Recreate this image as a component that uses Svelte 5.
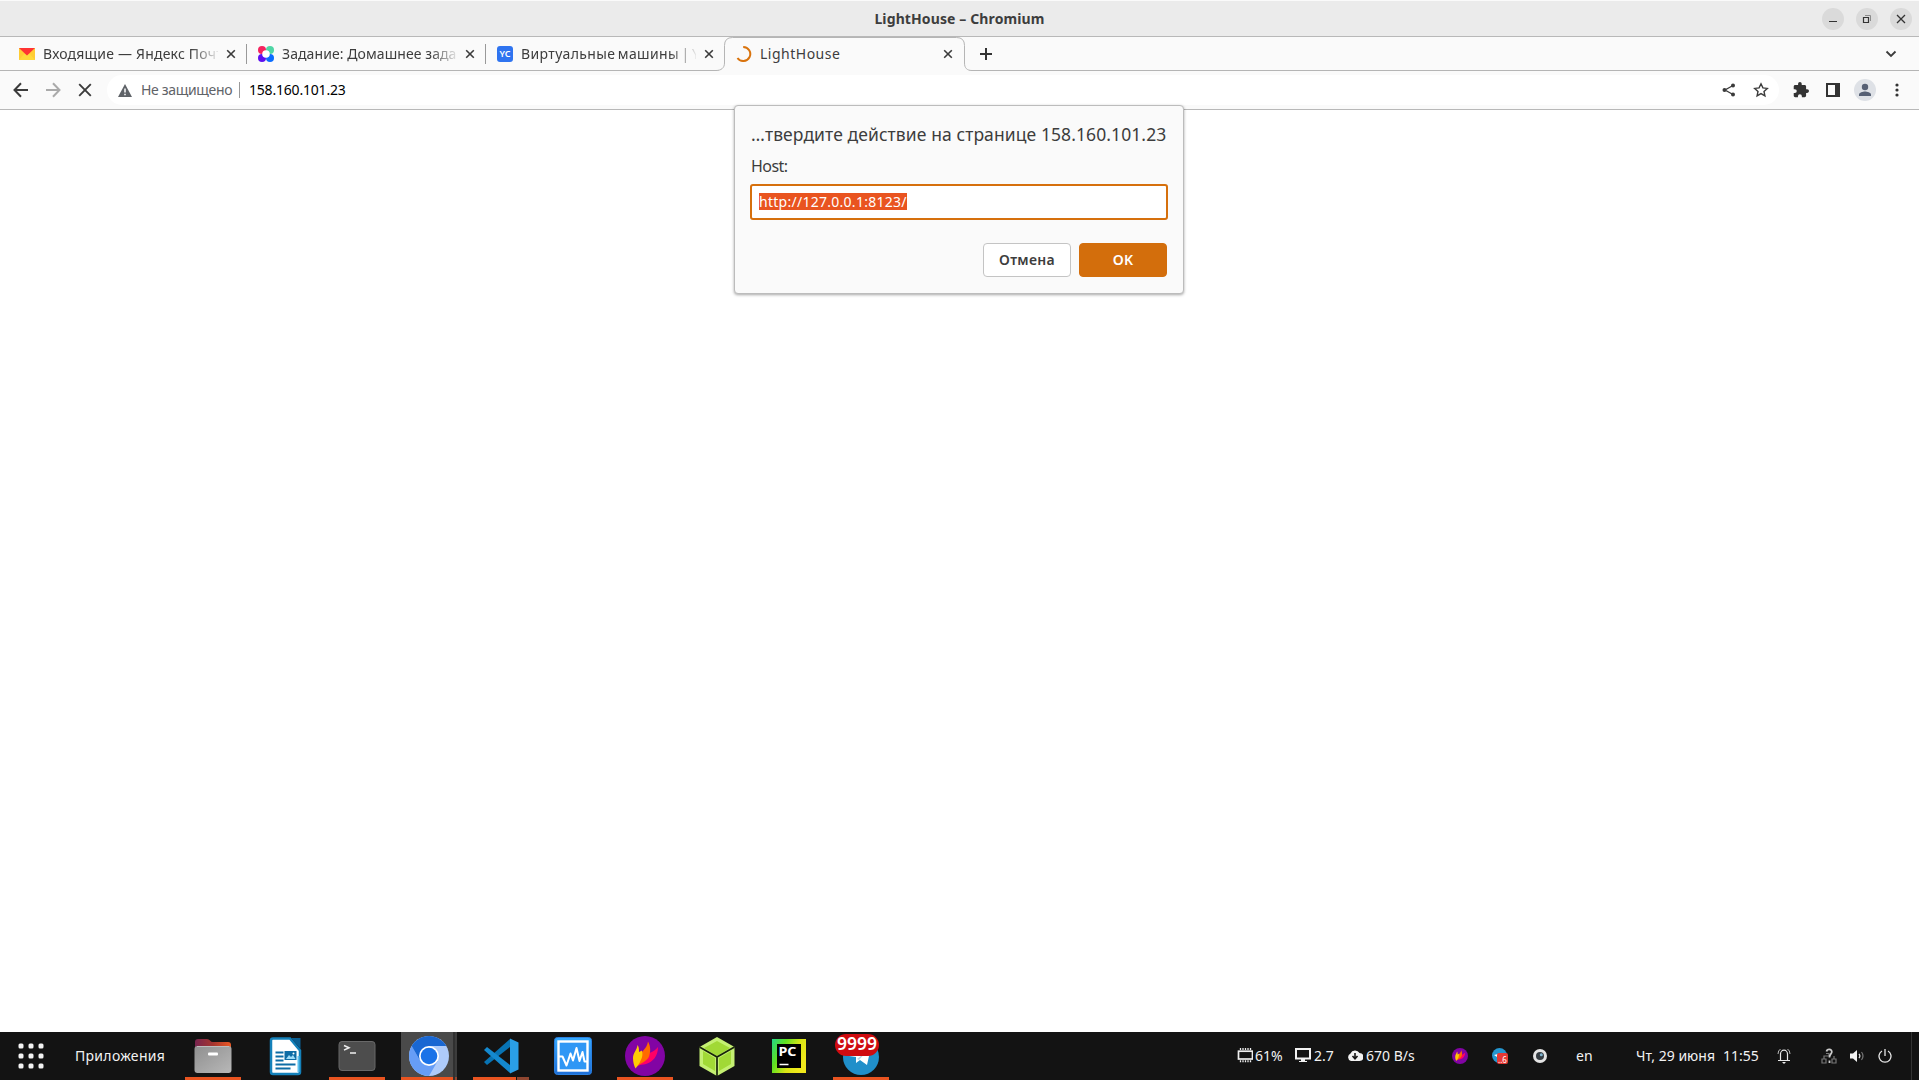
<script>
  const tabs = [
    { kind: 'mail', title: 'Входящие — Яндекс Почта' },
    { kind: 'task', title: 'Задание: Домашнее задание' },
    { kind: 'cloud', title: 'Виртуальные машины | Yandex' },
    { kind: 'load', title: 'LightHouse', active: true }
  ];
  const apps = [
    { id: 'files', run: true },
    { id: 'writer' },
    { id: 'terminal', run: true },
    { id: 'chromium', run: true, focus: true },
    { id: 'code', run: true, two: true },
    { id: 'monitor' },
    { id: 'flame', run: true },
    { id: 'cube' },
    { id: 'pycharm' },
    { id: 'telegram', run: true }
  ];
  const dots = [3, 13, 23];
  const pins = [3, 5.500, 8, 10.500, 13];
</script>

{#snippet flame()}
  <circle cx="20" cy="20" r="20" fill="#8204a4" />
  <path d="M13 30C16 25 18 22 20 20c4-4 8-3 13-9 0 9-5 15-12 17-3 1-5 0-8 2z" fill="#ff0066" />
  <path d="M12 30.500C13 27 16 24 16 19c0-4 6-6 7-13.500 2.500 5 3 9 1 15-2 5-8 6-12 10z" fill="#ff6a00" />
  <path d="M10.500 32.500C9 30 8 26 8 22c0-5 4-8 4.500-13 1.500 2 1.500 4 1.500 7l3-1.500C18 20 17 22 15 26c-1 2-2.500 4-4.500 6.500z" fill="#ffcb05" />
{/snippet}

<div class="screen">
  <header class="title">
    <div class="caption">LightHouse – Chromium</div>
    <div class="winbtns">
      <svg width="22" height="22"><circle cx="11" cy="11" r="11" fill="#dadada" /><path d="M7 13.5h8" stroke="#333" /></svg>
      <svg width="22" height="22"><circle cx="11" cy="11" r="11" fill="#dadada" /><path d="M7.500 9.500h5v5h-5z" fill="none" stroke="#333" stroke-width="1.200" /><path d="M9 7.500h5.500V13" fill="none" stroke="#8b8b8b" /></svg>
      <svg width="22" height="22"><circle cx="11" cy="11" r="11" fill="#dadada" /><path d="M7 7l8 8M15 7l-8 8" stroke="#333" stroke-width="1.3" /></svg>
    </div>
  </header>

  <nav class="tabs">
    {#each tabs as tab, i}
      <div class="tab {tab.kind}" class:active={tab.active} class:sep={i < 2}>
        {#if tab.active}
          <svg class="shape" width="256" height="35" viewBox="0 0 256 35">
            <path d="M0 35V33.500C5 33.500 8.500 31 8.500 26V8.500Q8.500 .5 16.500 .5H240.500Q248.500 .5 248.500 8.500V26C248.500 31 251 33.500 256 33.500V35z" fill="#fafafa" />
            <path d="M0 33.500C5 33.500 8.500 31 8.500 26V8.500Q8.500 .5 16.500 .5H240.500Q248.500 .5 248.500 8.500V26C248.500 31 251 33.500 256 33.500" fill="none" stroke="#b5b5b5" />
          </svg>
        {/if}
        <svg class="fav" width="16" height="16">
          {#if tab.kind === 'mail'}
            <path d="M0 2h16v12H0z" fill="#ffcc33" /><path d="M0 14L5 8h6l5 6z" fill="#ffd83b" /><path d="M0 2h16L8 9.500z" fill="#f33" />
          {:else if tab.kind === 'task'}
            <circle cx="4" cy="4" r="4" fill="#f5245f" /><circle cx="12" cy="4" r="4" fill="#4fd6a5" /><circle cx="4" cy="12" r="4" fill="#5d0ff0" /><circle cx="12" cy="12" r="4" fill="#0a6cff" /><circle cx="8" cy="8" r="3.800" fill="#fff" />
          {:else if tab.kind === 'cloud'}
            <rect width="16" height="16" rx="3" fill="#2f74f0" /><text class="yc" x="8" y="11.300" text-anchor="middle">YC</text>
          {:else}
            <path d="M7.200 1A7 7 0 1 1 1.500 12" fill="none" stroke="#d9730d" stroke-width="2" />
          {/if}
        </svg>
        <span class="name">{tab.title}</span>
        <svg class="x" width="10" height="10"><path d="M1.200 1.200l7.600 7.600M8.800 1.200l-7.600 7.600" stroke="#3b3b3b" stroke-width="1.600" /></svg>
      </div>
    {/each}
    <svg class="plus" width="12" height="12"><path d="M6 0v12M0 6h12" stroke="#333" stroke-width="2" /></svg>
    <svg class="chev" width="12" height="8"><path d="M1.500 1.500L6 6l4.500-4.500" fill="none" stroke="#3b3b3b" stroke-width="1.800" /></svg>
  </nav>

  <div class="toolbar">
    <svg class="nav" width="16" height="16"><path d="M15 8H2M8 1.300L1.500 8 8 14.700" fill="none" stroke="#3b3b3b" stroke-width="2" /></svg>
    <svg class="nav" width="16" height="16"><path d="M1 8h13M8 1.300L14.500 8 8 14.700" fill="none" stroke="#aaa" stroke-width="2" /></svg>
    <svg class="nav" width="16" height="16"><path d="M2.200 2.200l11.600 11.600M13.800 2.200L2.200 13.800" fill="none" stroke="#3b3b3b" stroke-width="1.900" /></svg>
    <div class="omni">
      <svg width="14" height="13"><path d="M7 0l7 13H0z" fill="#5f6368" /><path d="M7 4.500v4M7 9.700v1.500" stroke="#fff" stroke-width="1.500" /></svg>
      <span class="unsafe">Не защищено</span>
      <i class="bar"></i>
      <span class="url">158.160.101.23</span>
      <svg class="share" width="14" height="14"><path d="M11 2.500L3 7l8 4.500" fill="none" stroke="#3b3b3b" stroke-width="1.300" /><circle cx="2.500" cy="7" r="2" fill="#3b3b3b" /><circle cx="11" cy="2.500" r="2" fill="#3b3b3b" /><circle cx="11" cy="11.500" r="2" fill="#3b3b3b" /></svg>
      <svg class="star" width="16" height="16"><path d="M8 1.800l1.900 4.100 4.400.5-3.300 3 .9 4.400L8 11.600l-3.900 2.200.9-4.400-3.300-3 4.400-.5z" fill="none" stroke="#3b3b3b" stroke-width="1.400" /></svg>
    </div>
    <svg class="puz" width="16" height="16" viewBox="1 1 22 22"><path fill="#333" d="M20.500 11H19V7c0-1.100-.9-2-2-2h-4V3.500a2.500 2.500 0 0 0-5 0V5H4c-1.100 0-2 .9-2 2v3.800h1.500a2.700 2.700 0 0 1 0 5.400H2V20c0 1.100.9 2 2 2h3.800v-1.500a2.700 2.700 0 0 1 5.400 0V22H17c1.100 0 2-.9 2-2v-4h1.500a2.500 2.500 0 0 0 0-5z" /></svg>
    <svg class="panel" width="14" height="14"><path d="M0 0h14v14H0zM2 2v10h7V2z" fill="#333" fill-rule="evenodd" /></svg>
    <svg class="ava" width="22" height="22"><circle cx="11" cy="11" r="11" fill="#dee1e6" /><circle cx="11" cy="8" r="3.200" fill="#566074" /><path d="M5 17v-1.500c0-2 4-3 6-3s6 1 6 3V17z" fill="#566074" /></svg>
    <svg class="more" width="4" height="14"><circle cx="2" cy="2" r="1.600" fill="#333" /><circle cx="2" cy="7" r="1.600" fill="#333" /><circle cx="2" cy="12" r="1.600" fill="#333" /></svg>
  </div>

  <main></main>

  <section class="dialog">
    <h1>…твердите действие на странице 158.160.101.23</h1>
    <p>Host:</p>
    <div class="field"><mark>http://127.0.0.1:8123/</mark></div>
    <div class="actions"><button>Отмена</button><button class="ok">OK</button></div>
  </section>

  <footer>
    <svg class="grid" width="26" height="26">
      {#each dots as y}{#each dots as x}<rect x={x - 2.500} y={y - 2.500} width="5" height="5" rx="1.500" fill="#f2f2f2" />{/each}{/each}
    </svg>
    <span class="apps-label">Приложения</span>
    <div class="dock">
      {#each apps as app}
        <div class="app" class:focus={app.focus}>
          <svg width="56" height="48">
            {#if app.id === 'files'}
              <defs>
                <linearGradient id="fo"><stop offset="0" stop-color="#77244f" /><stop offset=".5" stop-color="#a5352f" /><stop offset="1" stop-color="#ee5a24" /></linearGradient>
                <linearGradient id="fg" x2="1" y2="1"><stop offset="0" stop-color="#8f8f8f" /><stop offset="1" stop-color="#b8b8b8" /></linearGradient>
              </defs>
              <path d="M10 10q0-3 3-3h9q2 0 3 1.500T28 10h15q3 0 3 3v20H10z" fill="url(#fo)" />
              <rect x="9.500" y="14" width="37" height="27" rx="3" fill="url(#fg)" /><path d="M12 14.500h32" stroke="#bdbdbd" /><rect x="23" y="20.500" width="10" height="3" rx="1" fill="#fff" />
            {:else if app.id === 'writer'}
              <path d="M16 6.500h17l10 12V40q0 2-2 2h-25q-2 0-2-2V8.500q0-2 2-2z" fill="#fff" stroke="#1481ba" stroke-width="2.500" />
              <path d="M34 6h9.500v11z" fill="#0b5f92" /><path d="M40.500 24h2v16h-2z" fill="#5cc0ee" />
              <path d="M18.500 20.500h8M18.500 24.500h8M18.500 28.500h8M18.500 32.500h20M18.500 36.500h15" stroke="#0d6ca5" stroke-width="2" />
              <path d="M27.500 19h12v9h-12z" fill="#0d6ca5" /><path d="M29 27l3-4 2 2 2-2 2.500 4z" fill="#9edcf8" /><circle cx="36.500" cy="21.500" r="1" fill="#fff" />
            {:else if app.id === 'terminal'}
              <rect x="10" y="9.500" width="36" height="29" rx="3" fill="#4d4d4d" stroke="#686868" /><path d="M15 13.500l5 2.300-5 2.300M21 21h6" fill="none" stroke="#eee" stroke-width="1.500" />
            {:else if app.id === 'chromium'}
              <g transform="translate(28 24)">
                <circle r="20" fill="#aecbfa" />
                <path d="M-17.300-10A20 20 0 0 0 0 20L8.700 5-8.700 5z" fill="#669df6" />
                <path d="M-17.300-10A20 20 0 0 1 17.300-10H0L-8.700 5z" fill="#1967d2" />
                <circle r="10" fill="#fff" /><circle r="8.300" fill="#1a73e8" />
              </g>
            {:else if app.id === 'code'}
              <path d="M11 30l3 3L37 15V7z" fill="#0873b3" /><path d="M11 18l3-3L37 33v8z" fill="#1489cf" /><path d="M37 6.500l8.500 4v27l-8.500 4z" fill="#2a9fe6" />
            {:else if app.id === 'monitor'}
              <defs><linearGradient id="mo" x2="0" y2="1"><stop offset="0" stop-color="#35aaff" /><stop offset="1" stop-color="#1e6fd8" /></linearGradient></defs>
              <rect x="9.500" y="5.500" width="37" height="37" rx="3" fill="url(#mo)" stroke="#2a80e0" /><rect x="13.500" y="9.500" width="29" height="29" fill="#2f97f5" stroke="#fff" stroke-width="2.400" /><path d="M13.500 24.500h4l4 9 4-12 2.500 7L31.500 16l3 13 3-9 2 9.500h3" fill="none" stroke="#fff" stroke-width="2" stroke-linejoin="round" />
            {:else if app.id === 'flame'}
              <g transform="translate(8 4)">{@render flame()}</g>
            {:else if app.id === 'cube'}
              <path d="M28 5l17.500 10v19L28 44 10.500 34V15z" fill="#c4ef72" /><path d="M28 9l13 7-13 8-13-8zM14 19l12 7v13l-12-7zM42 19l-12 7v13l12-7z" fill="#a1d936" /><path d="M10.500 15L28 25l17.500-10M28 25v19" fill="none" stroke="#18240b" stroke-width="1.700" />
            {:else if app.id === 'pycharm'}
              <defs><linearGradient id="pc" x2="1" y2=".5"><stop offset="0" stop-color="#21d789" /><stop offset=".35" stop-color="#5fe020" /><stop offset=".7" stop-color="#d9e515" /><stop offset="1" stop-color="#f0e81b" /></linearGradient></defs>
              <path d="M11 7h34v34H11z" fill="url(#pc)" /><path d="M16 12h24v24H16z" fill="#000" /><text class="pc" x="17.500" y="24" textLength="18" lengthAdjust="spacingAndGlyphs">PC</text><path d="M18.500 32.500h9" stroke="#fff" stroke-width="1.500" />
            {:else}
              <circle cx="28" cy="25" r="18" fill="#208fca" /><path d="M16 24l22-9-4 18-7-5-4 3 0-6z" fill="#fff" /><path d="M24 27l9-7-7 8z" fill="#b8d6e8" />
              <rect x="2" y="2" width="44" height="22" rx="11" fill="#cf0b10" /><text class="cnt" x="4" y="17.500" textLength="40" lengthAdjust="spacingAndGlyphs">9999</text>
            {/if}
          </svg>
          {#if app.run}<i class="run" class:two={app.two}></i>{/if}
        </div>
      {/each}
    </div>

    <div class="tray">
      <svg width="16" height="16"><rect x="1.500" y="3.200" width="14" height="7.800" fill="none" stroke="#eee" stroke-width="1.700" />{#each pins as x}<path d="M{x + .5} 0v2M{x + .5} 12.200v2" stroke="#eee" stroke-width="1.300" />{/each}</svg>
      <span class="mem">61%</span>
      <svg width="16" height="16"><rect x="1" y="1" width="14" height="9.500" fill="none" stroke="#f2f2f2" stroke-width="2" /><path d="M6 11h4v2H6zM4 13h8v1H4z" fill="#f2f2f2" /></svg>
      <span class="cpu">2.7</span>
      <svg width="16" height="16"><path d="M4 13a4 4 0 0 1-.5-7.500 5 5 0 0 1 9-.5A4 4 0 0 1 12.500 13z" fill="#f2f2f2" /><path d="M8 5v5M5.500 8L8 10.700 10.500 8" fill="none" stroke="#151515" stroke-width="1.600" /></svg>
      <span class="net">670 B/s</span>
      <svg class="t1" width="16" height="16" viewBox="0 0 40 40">{@render flame()}</svg>
      <svg class="t2" width="16" height="16"><circle cx="7.500" cy="7.500" r="7.500" fill="#2496d0" /><path d="M2 7l4-1-1 3z" fill="#fff" /><rect x="5" y="5" width="11" height="11" rx="2" fill="#e53935" /><text class="tiny" x="6" y="14.500">..6</text></svg>
      <svg class="t3" width="16" height="16"><circle cx="8" cy="8" r="7" fill="#e4e4e4" /><circle cx="8" cy="8" r="4" fill="#353c42" /><circle cx="9.300" cy="6.700" r="1.500" fill="#7fb4d0" /></svg>
      <span class="lang">en</span>
      <span class="date">Чт, 29 июня</span><span class="time">11:55</span>
      <svg class="bell" width="14" height="16"><path d="M1 12.500h12M3.500 12V6a3.500 3.800 0 0 1 7 0v6" fill="none" stroke="#e8e8e8" stroke-width="1.200" /><path d="M1 6Q1 2.500 3.500 1M13 6Q13 2.500 10.500 1" fill="none" stroke="#bbb" /><path d="M5 14h4l-2 2z" fill="#eee" /></svg>
      <svg class="lan" width="16" height="16"><path d="M1 11h4v4H1zM11 11h4v4h-4zM3 11V8h5M13 11V8M5 5.500h3v3" fill="none" stroke="#777" stroke-width="1.200" /><path d="M5.500 3.500C6 .5 11 .5 10.800 4 10.500 6.500 8.500 6 8.500 9.500M8.500 12.500v2.500" fill="none" stroke="#ccc" stroke-width="1.800" /></svg>
      <svg class="vol" width="15" height="14"><path d="M0 4.500h3L7 1v12L3 9.500H0z" fill="#f2f2f2" /><path d="M9 4.800q1.800 2.200 0 4.400" fill="none" stroke="#ddd" stroke-width="1.200" /><path d="M11.500 3q3 4 0 8" fill="none" stroke="#777" stroke-width="1.200" /></svg>
      <svg class="pow" width="14" height="14"><path d="M4 2A6 6 0 1 0 10 2M7 0v7" fill="none" stroke="#e8e8e8" stroke-width="1.300" /></svg>
      <i class="edge"></i>
    </div>
  </footer>
</div>

<style>
  :global(body) { margin: 0; overflow: hidden; }
  .screen { position: relative; width: 1919px; height: 1080px; display: flex; flex-direction: column; background: #fff; font: 14px/20px "Noto Sans", "Open Sans", sans-serif; color: #3d3d3d; white-space: nowrap; }
  svg { display: block; flex: none; }
  .title { box-sizing: border-box; height: 37px; flex: none; display: grid; grid-template-columns: 1fr auto 1fr; align-items: center; background: #ebebeb; border-top: 1px solid #fafafa; border-bottom: 1px solid #b8b8b8; }
  .caption { grid-column: 2; font-weight: 700; font-size: 14px; letter-spacing: .12px; padding-top: 1px; }
  .winbtns { justify-self: end; display: flex; gap: 12px; margin-right: 7px; }
  .tabs { box-sizing: border-box; height: 34px; flex: none; display: flex; align-items: center; background: #fafafa; border-bottom: 1px solid #b5b5b5; padding-left: 7px; }
  .tab { box-sizing: border-box; position: relative; width: 239px; height: 33px; flex: none; display: flex; align-items: center; padding-left: 12px; }
  .tab.sep::after { content: ""; position: absolute; right: -1px; top: 7px; width: 1px; height: 20px; background: #999; }
  .shape { position: absolute; left: -8px; top: 0; }
  .fav, .name, .x { position: relative; }
  .name { width: 175px; margin-left: 8px; overflow: hidden; letter-spacing: .08px; mask-image: linear-gradient(90deg, #000 148px, transparent 178px); }
  .mail .name { letter-spacing: .2px; }
  .cloud .name { letter-spacing: .37px; word-spacing: -1.5px; }
  .active .name { mask-image: none; letter-spacing: .5px; }
  .x { margin-left: 8px; }
  .yc { font: 600 9px "Noto Sans", sans-serif; fill: #fff; }
  .plus { margin-left: 17px; }
  .chev { margin-left: auto; margin-right: 22px; }
  .toolbar { box-sizing: border-box; height: 39px; flex: none; display: flex; align-items: center; background: #fafafa; border-bottom: 1px solid #b8b8b8; padding-left: 13px; }
  .nav { margin-right: 16px; }
  .omni { box-sizing: border-box; width: 1672px; height: 30px; border-radius: 15px; background: #fff; display: flex; align-items: center; padding-left: 11px; margin-left: -2px; }
  .unsafe { width: 90px; margin-left: 9px; color: #5f6368; letter-spacing: -.33px; }
  .bar { width: 1px; height: 16px; background: #999; margin-left: 8px; }
  .url { margin-left: 9px; color: #000; letter-spacing: -.2px; }
  .share { margin-left: auto; margin-right: 17px; }
  .star { margin-right: 10px; }
  .puz { margin-left: 14px; }
  .panel { margin-left: 17px; }
  .ava { margin-left: 14px; }
  .more { margin-left: 19px; }
  main { flex: 1; background: #fff; }
  .dialog { box-sizing: border-box; position: absolute; left: 734px; top: 105px; width: 450px; height: 189px; padding: 16px 15px 0 15px; background: #fafafa; border: 1px solid #bcbcbc; border-radius: 4px; box-shadow: 0 1px 3px rgba(0,0,0,.35); display: flex; flex-direction: column; }
  h1 { margin: 0 0 0 1px; font: 400 17.500px/24px "Noto Sans", sans-serif; letter-spacing: .09px; }
  p { margin: 9px 0 0 1px; font-size: 16px; line-height: 22px; letter-spacing: -.55px; }
  .field { box-sizing: border-box; height: 36px; margin-top: 7px; border: 2px solid #d6700d; border-radius: 3px; background: #fff; display: flex; align-items: center; padding: 0 0 2px 7px; }
  mark { background: #e95420; color: #fff; line-height: 17px; height: 17px; letter-spacing: .27px; }
  .actions { display: flex; justify-content: flex-end; gap: 8px; margin: 23px 1px 0 0; }
  button { box-sizing: border-box; width: 88px; height: 34px; padding: 0; border: 1px solid #c4c4c4; border-radius: 4px; background: #fff; color: #3d3d3d; font: 600 14px/20px "Noto Sans", sans-serif; letter-spacing: .3px; }
  .ok { border-color: #d36e0c; background: #d36e0c; color: #fff; }
  footer { height: 48px; flex: none; display: flex; align-items: center; background: #131313; color: #f2f2f2; padding-left: 18px; }
  .apps-label { width: 109px; margin-left: 31px; flex: none; letter-spacing: .3px; }
  .dock { display: flex; gap: 16px; margin-left: 1px; }
  .app { position: relative; width: 56px; height: 48px; }
  .focus { background: linear-gradient(90deg, #4a4a4a 52px, #303030 52px, #303030 54px, #3c3c3c 54px); }
  .run { position: absolute; left: 0; bottom: 0; width: 56px; height: 3px; background: #e95420; }
  .run.two { background: linear-gradient(90deg, #e95420 43px, #131313 43px, #131313 44px, #8f4630 44px); }
  .focus .run { background: linear-gradient(90deg, #e95420 52px, #303030 52px, #303030 54px, #8f4630 54px); }
  .pc { font: 700 13px "Noto Sans", sans-serif; fill: #fff; }
  .cnt { font: 600 17px "Noto Sans", sans-serif; fill: #fff; }
  .tiny { font: 8px "Noto Sans", sans-serif; fill: #fff; }
  .tray { display: flex; align-items: center; flex: 1; height: 48px; margin-left: 348px; }
  .tray span { flex: none; }
  .mem { width: 40px; margin-left: 2px; }
  .cpu { width: 33px; margin-left: 3px; }
  .net { width: 86px; margin-left: 3px; }
  .t2 { margin-left: 24px; }
  .t3 { margin-left: 24px; }
  .lang { width: 60px; margin-left: 28px; }
  .date { width: 87px; }
  .time { width: 54px; }
  .lan { margin-left: 30px; }
  .vol { margin-left: 13px; }
  .pow { margin-left: 13px; }
  .edge { width: 1px; height: 48px; background: #333; margin-left: 19px; }
</style>
